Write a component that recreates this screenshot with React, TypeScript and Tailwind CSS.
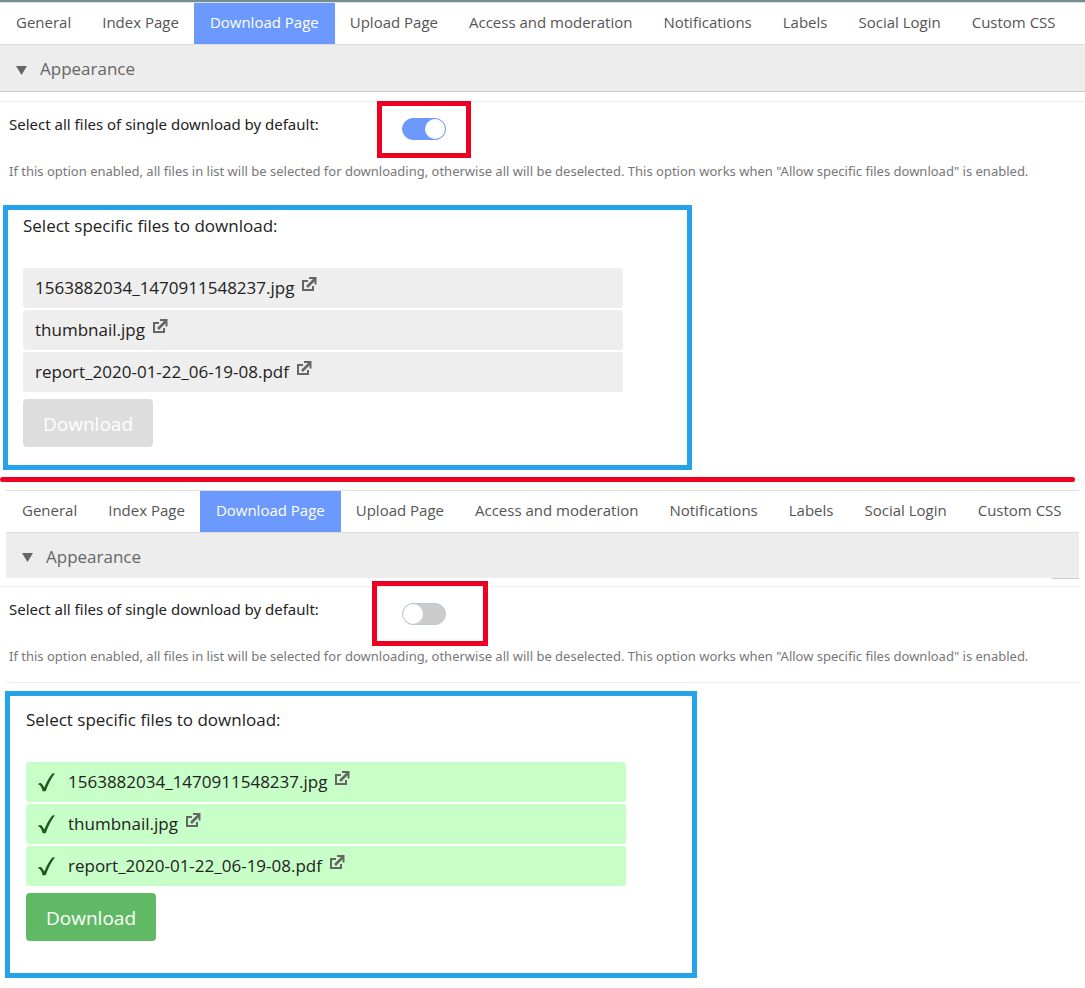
import { useState } from "react";
import clsx from "clsx";

const tabs = [
  "General",
  "Index Page",
  "Download Page",
  "Upload Page",
  "Access and moderation",
  "Notifications",
  "Labels",
  "Social Login",
  "Custom CSS",
];

const files = [
  "1563882034_1470911548237.jpg",
  "thumbnail.jpg",
  "report_2020-01-22_06-19-08.pdf",
];

function ExternalIcon() {
  return (
    <svg width="15" height="15" viewBox="0 0 15 15" fill="none" stroke="#666" strokeWidth="2">
      <path d="M6 4H1v9h10V9" />
      <path d="M5 10L12.500 2.500" strokeWidth="2.600" />
      <path d="M7 1h6.500v6.500" />
      <path d="M9.500 1H13.500V5Z" fill="#666" stroke="none" />
    </svg>
  );
}

function CheckIcon() {
  return (
    <svg width="17" height="19" viewBox="0 0 17 19" fill="#1c5a1c">
      <path d="M0 11Q2.500 9 4.200 11.200L6.300 14.500Q10 5.500 14.300 0.500L17 0.300Q11.500 7.500 7.800 18L4.800 18.500Q3.500 14 2.200 12.500Q1.300 11.500 0 11.600Z" />
    </svg>
  );
}

function TabBar() {
  return (
    <nav className="flex -space-x-px border-y border-[#ddd]">
      {tabs.map((tab) => (
        <a
          key={tab}
          href="#"
          className={clsx(
            "h-[41px] px-4 text-[15px] leading-[39px] whitespace-nowrap",
            tab === "Download Page" ? "bg-[#6c99fd] text-white" : "text-[#555]",
          )}
        >
          {tab}
        </a>
      ))}
    </nav>
  );
}

function SectionHeading({ className }: { className?: string }) {
  return (
    <button
      type="button"
      className={clsx("flex w-full items-center bg-[#ededed] pt-0.5 pl-4 text-[17px] text-[#666]", className)}
    >
      <svg width="11" height="9" viewBox="0 0 11 9" fill="#666" className="mt-0.5 mr-[13px]">
        <path d="M0 0H11L5.500 9Z" />
      </svg>
      Appearance
    </button>
  );
}

type SettingProps = {
  id: string;
  on: boolean;
  onChange: (on: boolean) => void;
  markClass: string;
};

function Setting({ id, on, onChange, markClass }: SettingProps) {
  return (
    <div className="px-[9px] pt-[11px] font-['Noto_Sans',sans-serif]">
      <div className="flex h-12 items-start">
        <label htmlFor={id} className="w-[393px] text-[15px] leading-[22px] text-[#222]">
          Select all files of single download by default:
        </label>
        <div className="relative mt-[5px] h-[22px] w-11">
          <input
            id={id}
            type="checkbox"
            role="switch"
            checked={on}
            onChange={(e) => onChange(e.target.checked)}
            className="block h-[22px] w-11 appearance-none rounded-full border border-[#b5c7d8] bg-[#ccc] before:block before:size-5 before:rounded-full before:bg-white checked:border-[#6c99fd] checked:bg-[#6c99fd] checked:before:ml-[22px]"
          />
          <span className={clsx("pointer-events-none absolute border-[5px] border-[#ed0022]", markClass)} />
        </div>
      </div>
      <p className="text-[13px] leading-5 text-[#777]">
        If this option enabled, all files in list will be selected for downloading, otherwise all will be
        deselected. This option works when "Allow specific files download" is enabled.
      </p>
    </div>
  );
}

function FilePicker({ selected, className }: { selected: boolean; className: string }) {
  return (
    <div className={clsx("border-[5px] border-[#24a3e8]", className)}>
      <h2 className="text-[17px] leading-6 text-[#222]">Select specific files to download:</h2>
      <ul className="mt-[30px] max-w-[600px] space-y-0.5">
        {files.map((file) => (
          <li
            key={file}
            className={clsx(
              "flex h-10 items-center rounded-[3px] px-3 text-[17px] text-[#222]",
              selected ? "bg-[#c8ffc8]" : "bg-[#eee]",
            )}
          >
            {selected && (
              <span className="mr-[13px]">
                <CheckIcon />
              </span>
            )}
            {file}
            <a href="#" aria-label={`Open ${file}`} className="mb-2 ml-2">
              <ExternalIcon />
            </a>
          </li>
        ))}
      </ul>
      <button
        type="button"
        disabled={!selected}
        className="mt-[7px] block h-12 w-[130px] rounded-[4px] bg-[#60ba65] pt-0.5 text-[19px] text-white disabled:bg-[#ddd]"
      >
        Download
      </button>
    </div>
  );
}

export default function App() {
  const [first, setFirst] = useState(true);
  const [second, setSecond] = useState(false);

  return (
    <div className="min-h-screen overflow-x-hidden bg-white font-['Open_Sans','Noto_Sans',sans-serif]">
      <section>
        <div className="h-0.5 bg-[#738d93]" />
        <TabBar />
        <SectionHeading className="h-[47px] border-b border-[#ccc]" />
        <div className="mt-[9px] border-t border-[#eee]" />
        <Setting
          id="select-all-on"
          on={first}
          onChange={setFirst}
          markClass="-top-[17px] -right-[25px] -bottom-[18px] -left-[25px]"
        />
        <FilePicker selected={false} className="mt-6 ml-[3px] max-w-[689px] px-[15px] pt-1 pb-[18px]" />
      </section>

      <div className="mt-[7px] mr-[10px] h-[5px] rounded-full bg-[#ed0022]" />

      <section className="mt-2">
        <div className="mr-[6px] ml-[6px]">
          <TabBar />
          <SectionHeading className="h-[45px]" />
        </div>
        <div className="mr-[6px] flex h-[9px]">
          <div className="flex-1 border-b border-[#eee]" />
          <div className="w-[27px] border-y border-t-[#ccc] border-b-[#eee]" />
        </div>
        <Setting
          id="select-all-off"
          on={second}
          onChange={setSecond}
          markClass="-top-[22px] -right-[42px] -bottom-[21px] -left-[30px]"
        />
        <div className="mt-4 mr-[6px] ml-[6px] border-t border-[#eee]" />
        <FilePicker selected className="mt-2 ml-[5px] max-w-[692px] px-4 pt-3 pb-8" />
      </section>
    </div>
  );
}
